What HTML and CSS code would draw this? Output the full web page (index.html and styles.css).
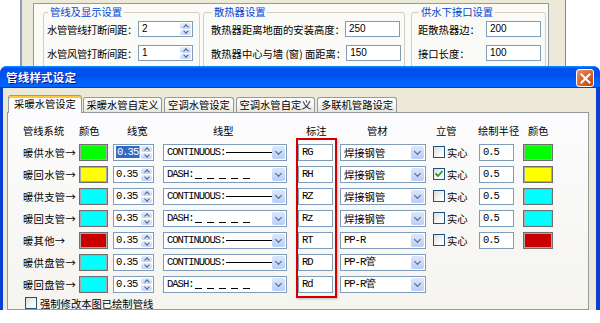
FILE: index.html
```html
<!DOCTYPE html>
<html>
<head>
<meta charset="utf-8">
<link rel="stylesheet" href="styles.css">
</head>
<body>
<div class="bgwin">
  <div class="bgpane">
    <fieldset class="grp g1">
      <legend>管线及显示设置</legend>
      <div class="frow"><span>水管管线打断间距：</span><span class="tb spinbox"><span class="v">2</span><span class="arr"><i class="up"></i><i class="dn"></i></span></span></div>
      <div class="frow r2"><span>水管风管打断间距：</span><span class="tb spinbox"><span class="v">1</span><span class="arr"><i class="up"></i><i class="dn"></i></span></span></div>
    </fieldset>
    <fieldset class="grp g2">
      <legend>散热器设置</legend>
      <div class="frow"><span>散热器距离地面的安装高度：</span><span class="tb">250</span></div>
      <div class="frow r2"><span>散热器中心与墙 (窗) 面距离：</span><span class="tb">150</span></div>
    </fieldset>
    <fieldset class="grp g3">
      <legend>供水下接口设置</legend>
      <div class="frow"><span>距散热器边：</span><span class="tb">200</span></div>
      <div class="frow r2"><span>接口长度：</span><span class="tb">100</span></div>
    </fieldset>
  </div>
</div>

<div class="dlg">
  <div class="titlebar">
    <span class="ttl">管线样式设定</span>
    <span class="close"><svg width="11" height="11" viewBox="0 0 11 11"><path d="M1.5 1.5 L9.5 9.5 M9.5 1.5 L1.5 9.5" stroke="#fff" stroke-width="2" stroke-linecap="square"/></svg></span>
  </div>
  <div class="dlgbody">
    <div class="tabs">
      <span class="tab on t1">采暖水管设定</span>
      <span class="tab t2">采暖水管自定义</span>
      <span class="tab t3">空调水管设定</span>
      <span class="tab t4">空调水管自定义</span>
      <span class="tab t5">多联机管路设定</span>
    </div>
    <div class="pane">
      <div class="tbl">
        <span class="h">管线系统</span>
        <span class="h">颜色</span>
        <span class="h h3">线宽</span>
        <span class="h h4">线型</span>
        <span class="h h5">标注</span>
        <span class="h h6">管材</span>
        <span class="h h7">立管</span>
        <span class="h h8">绘制半径</span>
        <span class="h h9">颜色</span>

        <span class="lbl">暖供水管→</span>
        <span class="sw green"></span>
        <span class="spin"><span class="v mono"><b class="hl">0.35</b></span><span class="arr"><i class="up"></i><i class="dn"></i></span></span>
        <span class="cmb lt"><span class="txt mono">CONTINUOUS:<i class="solid"></i></span><span class="btn"></span></span>
        <span class="ed mono">RG</span>
        <span class="cmb mat"><span class="txt">焊接钢管</span><span class="btn"></span></span>
        <span class="chk"><i class="cb"></i>实心</span>
        <span class="ed mono">0.5</span>
        <span class="sw sw2 green"></span>

        <span class="lbl">暖回水管→</span>
        <span class="sw yellow"></span>
        <span class="spin"><span class="v mono">0.35</span><span class="arr"><i class="up"></i><i class="dn"></i></span></span>
        <span class="cmb lt"><span class="txt mono">DASH:<i class="dash"></i></span><span class="btn"></span></span>
        <span class="ed mono">RH</span>
        <span class="cmb mat"><span class="txt">焊接钢管</span><span class="btn"></span></span>
        <span class="chk"><i class="cb"><svg width="10" height="10" viewBox="0 0 10 10"><path d="M1.5 4.5 L4 7 L8.5 2" stroke="#21a121" stroke-width="1.8" fill="none"/></svg></i>实心</span>
        <span class="ed mono">0.5</span>
        <span class="sw sw2 yellow"></span>

        <span class="lbl">暖供支管→</span>
        <span class="sw cyan"></span>
        <span class="spin"><span class="v mono">0.35</span><span class="arr"><i class="up"></i><i class="dn"></i></span></span>
        <span class="cmb lt"><span class="txt mono">CONTINUOUS:<i class="solid"></i></span><span class="btn"></span></span>
        <span class="ed mono">RZ</span>
        <span class="cmb mat"><span class="txt">焊接钢管</span><span class="btn"></span></span>
        <span class="chk"><i class="cb"></i>实心</span>
        <span class="ed mono">0.5</span>
        <span class="sw sw2 cyan"></span>

        <span class="lbl">暖回支管→</span>
        <span class="sw cyan"></span>
        <span class="spin"><span class="v mono">0.35</span><span class="arr"><i class="up"></i><i class="dn"></i></span></span>
        <span class="cmb lt"><span class="txt mono">DASH:<i class="dash"></i></span><span class="btn"></span></span>
        <span class="ed mono">Rz</span>
        <span class="cmb mat"><span class="txt">焊接钢管</span><span class="btn"></span></span>
        <span class="chk"><i class="cb"></i>实心</span>
        <span class="ed mono">0.5</span>
        <span class="sw sw2 cyan"></span>

        <span class="lbl">暖其他→</span>
        <span class="sw red"></span>
        <span class="spin"><span class="v mono">0.35</span><span class="arr"><i class="up"></i><i class="dn"></i></span></span>
        <span class="cmb lt"><span class="txt mono">CONTINUOUS:<i class="solid"></i></span><span class="btn"></span></span>
        <span class="ed mono">RT</span>
        <span class="cmb mat"><span class="txt mono">PP-R</span><span class="btn"></span></span>
        <span class="chk"><i class="cb"></i>实心</span>
        <span class="ed mono">0.5</span>
        <span class="sw sw2 red"></span>

        <span class="lbl">暖供盘管→</span>
        <span class="sw cyan"></span>
        <span class="spin"><span class="v mono">0.35</span><span class="arr"><i class="up"></i><i class="dn"></i></span></span>
        <span class="cmb lt"><span class="txt mono">CONTINUOUS:<i class="solid"></i></span><span class="btn"></span></span>
        <span class="ed mono">RD</span>
        <span class="cmb mat"><span class="txt mono">PP-R管</span><span class="btn"></span></span>
        <span></span><span></span><span></span>

        <span class="lbl">暖回盘管→</span>
        <span class="sw cyan"></span>
        <span class="spin"><span class="v mono">0.35</span><span class="arr"><i class="up"></i><i class="dn"></i></span></span>
        <span class="cmb lt"><span class="txt mono">DASH:<i class="dash"></i></span><span class="btn"></span></span>
        <span class="ed mono">Rd</span>
        <span class="cmb mat"><span class="txt mono">PP-R管</span><span class="btn"></span></span>
        <span></span><span></span><span></span>
      </div>
      <div class="force"><i class="cb"></i>强制修改本图已绘制管线</div>
      <div class="redbox"></div>
    </div>
  </div>
</div>
</body>
</html>
```

FILE: styles.css
```css
* { box-sizing: border-box; }
html, body { margin: 0; padding: 0; }
body {
  width: 600px; height: 323px; overflow: hidden; position: relative;
  background: #fff;
  font-family: "Noto Sans CJK SC", "Liberation Sans", sans-serif;
  font-size: 10.3px; color: #000;
}
i { font-style: normal; }

/* background window */
.bgwin {
  position: absolute; left: 20px; top: 0; width: 546px; height: 80px;
  background: #ece9d8;
  border-left: 2px solid #8c9cbc; border-right: 1px solid #7a8aa6;
  padding: 3px 16px 0 11px;
}
.bgpane {
  height: 100%; border: 1px solid #919b9c; background: #fafaf6;
  display: flex; padding: 2px 0 0 9px;
}
.grp {
  margin: 0; padding: 0 4px 0 3px; min-width: 0;
  border: 1px solid #d0d0bf; border-radius: 3px; height: 80px;
}
.g1 { width: 157px; }
.g2 { width: 202px; margin-left: 3px; padding-left: 7px; }
.g3 { width: 135px; margin-left: 6px; padding-left: 6px; }
.grp legend { color: #0046d5; padding: 0 2px; margin-left: 1px; line-height: 12px; font-size: 10.3px; }
.frow { display: flex; align-items: center; justify-content: space-between; height: 16px; margin-top: 3px; white-space: nowrap; }
.frow.r2 { margin-top: 8px; }
.g1 .frow { padding-right: 2px; letter-spacing: -0.3px; }
.tb {
  width: 55px; height: 16px; border: 1px solid #7f9db9; background: #fff;
  font-family: "Liberation Sans", sans-serif; font-size: 10px; line-height: 14px; padding-left: 3px;
  flex: none; letter-spacing: 0;
}
.tb.spinbox { display: flex; padding-left: 0; }
.tb.spinbox .v { flex: 1; padding-left: 3px; }

/* dialog */
.dlg {
  position: absolute; left: 0; top: 66px; width: 600px; height: 244px;
  background: #0a3fd6; border-radius: 7px 7px 0 0; overflow: hidden;
  display: flex; flex-direction: column;
}
.titlebar {
  height: 22px; flex: none; display: flex; align-items: center; justify-content: space-between;
  padding: 0 6px 0 6px;
  background: linear-gradient(180deg, #0997ff 0%, #0053ee 10%, #0050ee 40%, #0066ff 86%, #0066ff 92%, #005bff 95%, #003dd7 97%, #003dd7 100%);
}
.ttl { color: #fff; font-weight: bold; font-size: 11.5px; text-shadow: 1px 1px #0f1089; letter-spacing: 0.2px; }
.close {
  width: 18px; height: 18px; margin-top: 2px; border: 1px solid #fff; border-radius: 3px;
  background: radial-gradient(circle at 90% 90%, #cc4600 0%, #dc6527 55%, #e5804f 80%, #f0a585 100%);
  display: flex; align-items: center; justify-content: center;
}
.dlgbody {
  flex: 1; margin: 0 4px 0 3px; background: #ece9d8;
  padding-top: 7px; display: flex; flex-direction: column;
}
.tabs { display: flex; align-items: flex-end; height: 17px; padding-left: 5px; position: relative; z-index: 1; flex: none; }
.tab {
  height: 15px; border: 1px solid #919b9c; border-bottom: 0; border-radius: 3px 3px 0 0;
  background: linear-gradient(#ffffff, #f4f4f0 60%, #e6e5dc);
  text-align: center; line-height: 13px; white-space: nowrap; font-size: 10.3px;
}
.tab.on {
  height: 18px; margin-bottom: -1px; background: #fcfcfe;
  border-top: 1px solid #e68b2c; box-shadow: inset 0 2px #ffc73c; line-height: 15px;
}
.t1 { width: 74px; }
.t2 { width: 79px; margin-left: 1px; }
.t3 { width: 70px; margin-left: 2px; }
.t4 { width: 79px; margin-left: 2px; }
.t5 { width: 80px; margin-left: 2px; }
.pane {
  flex: 1; margin: 0 7px 0 4px; border: 1px solid #919b9c;
  background: linear-gradient(#fcfcfe, #f5f4ef);
  position: relative; padding: 6px 0 0 15px;
}
.tbl {
  display: grid;
  grid-template-columns: 56px 34px 50px 135px 42px 93px 46px 44px 30px;
  grid-auto-rows: 22px; align-items: center; white-space: nowrap;
}
.h3 { padding-left: 14px; }
.h4 { padding-left: 50px; }
.h5 { padding-left: 8px; }
.h6 { padding-left: 27px; }
.h7 { padding-left: 3px; }
.h8 { margin-left: -1px; }
.h9 { padding-left: 5px; }
.lbl { letter-spacing: 0.3px; }
.mono { font-family: "Liberation Mono", monospace; font-size: 10.5px; letter-spacing: -1px; }

.sw { width: 29px; height: 17px; border: 1px solid #6f6f6f; box-shadow: inset 0 0 0 1px #a9a9a9; }
.sw2 { width: 30px; }
.green { background: #00ff00; }
.yellow { background: #ffff00; }
.cyan { background: #00ffff; }
.red { background: #c80000; }

.spin { width: 41px; height: 17px; border: 1px solid #7f9db9; background: #fff; display: flex; }
.spin .v { flex: 1; padding-left: 2px; line-height: 15px; }
.hl { font-weight: normal; background: #316ac5; color: #fff; padding: 0 1px; box-shadow: 1px 0 #f0a030; }
.arr { width: 13px; display: flex; flex-direction: column; gap: 1px; padding: 1px; flex: none; }
.arr i {
  flex: 1; border-radius: 2px; background: linear-gradient(#e4ecfd, #c3d4f6);
  display: flex; align-items: center; justify-content: center;
}
.arr i::after {
  content: ""; width: 3px; height: 3px; border: solid #4d6185; border-width: 1.5px 0 0 1.5px;
}
.arr .up::after { transform: translateY(1px) rotate(45deg); }
.arr .dn::after { transform: translateY(-1px) rotate(225deg); }

.cmb { height: 17px; border: 1px solid #7f9db9; background: #fff; display: flex; align-items: center; }
.cmb.lt { width: 124px; }
.cmb.mat { width: 86px; }
.cmb .txt { flex: 1; padding-left: 3px; overflow: hidden; display: flex; align-items: center; line-height: 15px; }
.cmb .btn {
  width: 13px; height: 13px; margin-right: 1px; border-radius: 2px; flex: none;
  background: linear-gradient(#dde7fc, #b9cdf7); display: flex; align-items: center; justify-content: center;
}
.cmb .btn::after {
  content: ""; width: 4px; height: 4px; border: solid #4d6185; border-width: 0 1.5px 1.5px 0;
  transform: translateY(-1px) rotate(45deg);
}
.solid { display: inline-block; width: 53px; height: 1px; background: #000; margin-left: 1px; }
.dash {
  display: inline-block; width: 57px; height: 1px; margin-left: 1px; align-self: flex-end; margin-bottom: 3px;
  background: repeating-linear-gradient(90deg, #000 0 7px, transparent 7px 12px);
}

.ed { width: 35px; height: 17px; border: 1px solid #7f9db9; background: #fff; padding-left: 3px; line-height: 15px; }

.chk { display: flex; align-items: center; gap: 2px; }
.cb {
  width: 12px; height: 12px; border: 1px solid #1c5180; flex: none;
  background: linear-gradient(135deg, #dcdcd7, #ffffff 80%);
  display: flex; align-items: center; justify-content: center;
}
.force { display: flex; align-items: center; gap: 3px; margin-top: 2px; height: 12px; padding-left: 2px; }

.redbox {
  position: absolute; left: 288px; top: 25px; width: 41px; height: 160px;
  border: 2px solid #d00000; box-shadow: 1px 1px 2px rgba(0,0,0,0.25);
}
```
